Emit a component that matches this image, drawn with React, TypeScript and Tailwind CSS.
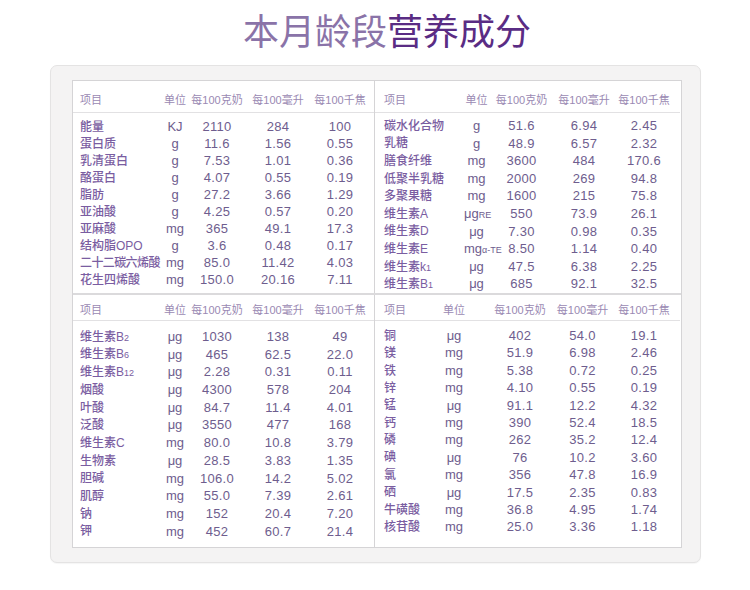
import type { ReactNode } from 'react';

type Row = [ReactNode, ReactNode, string, string, string];

const sub = (base: string, s: string) => (
  <>
    {base}
    <span className="text-[9px]">{s}</span>
  </>
);

const ug = 'μg';

const topLeft: Row[] = [
  ['能量', 'KJ', '2110', '284', '100'],
  ['蛋白质', 'g', '11.6', '1.56', '0.55'],
  ['乳清蛋白', 'g', '7.53', '1.01', '0.36'],
  ['酪蛋白', 'g', '4.07', '0.55', '0.19'],
  ['脂肪', 'g', '27.2', '3.66', '1.29'],
  ['亚油酸', 'g', '4.25', '0.57', '0.20'],
  ['亚麻酸', 'mg', '365', '49.1', '17.3'],
  ['结构脂OPO', 'g', '3.6', '0.48', '0.17'],
  [<span className="tracking-[-0.6px]">二十二碳六烯酸</span>, 'mg', '85.0', '11.42', '4.03'],
  ['花生四烯酸', 'mg', '150.0', '20.16', '7.11'],
];

const topRight: Row[] = [
  ['碳水化合物', 'g', '51.6', '6.94', '2.45'],
  ['乳糖', 'g', '48.9', '6.57', '2.32'],
  ['膳食纤维', 'mg', '3600', '484', '170.6'],
  ['低聚半乳糖', 'mg', '2000', '269', '94.8'],
  ['多聚果糖', 'mg', '1600', '215', '75.8'],
  ['维生素A', sub(ug, 'RE'), '550', '73.9', '26.1'],
  ['维生素D', ug, '7.30', '0.98', '0.35'],
  ['维生素E', sub('mg', 'α-TE'), '8.50', '1.14', '0.40'],
  [sub('维生素k', '1'), ug, '47.5', '6.38', '2.25'],
  [sub('维生素B', '1'), ug, '685', '92.1', '32.5'],
];

const bottomLeft: Row[] = [
  [sub('维生素B', '2'), ug, '1030', '138', '49'],
  [sub('维生素B', '6'), ug, '465', '62.5', '22.0'],
  [sub('维生素B', '12'), ug, '2.28', '0.31', '0.11'],
  ['烟酸', ug, '4300', '578', '204'],
  ['叶酸', ug, '84.7', '11.4', '4.01'],
  ['泛酸', ug, '3550', '477', '168'],
  ['维生素C', 'mg', '80.0', '10.8', '3.79'],
  ['生物素', ug, '28.5', '3.83', '1.35'],
  ['胆碱', 'mg', '106.0', '14.2', '5.02'],
  ['肌醇', 'mg', '55.0', '7.39', '2.61'],
  ['钠', 'mg', '152', '20.4', '7.20'],
  ['钾', 'mg', '452', '60.7', '21.4'],
];

const bottomRight: Row[] = [
  ['铜', ug, '402', '54.0', '19.1'],
  ['镁', 'mg', '51.9', '6.98', '2.46'],
  ['铁', 'mg', '5.38', '0.72', '0.25'],
  ['锌', 'mg', '4.10', '0.55', '0.19'],
  ['锰', ug, '91.1', '12.2', '4.32'],
  ['钙', 'mg', '390', '52.4', '18.5'],
  ['磷', 'mg', '262', '35.2', '12.4'],
  ['碘', ug, '76', '10.2', '3.60'],
  ['氯', 'mg', '356', '47.8', '16.9'],
  ['硒', ug, '17.5', '2.35', '0.83'],
  ['牛磺酸', 'mg', '36.8', '4.95', '1.74'],
  ['核苷酸', 'mg', '25.0', '3.36', '1.18'],
];

interface QuadrantProps {
  rows: Row[];
  cols: string; // grid template + left padding
  firstPad?: string; // extra left pad on the 每100克奶 column
  head: string; // header height / padding
  body: string; // body top padding
  rowH: string;
  className?: string;
}

function Quadrant({ rows, cols, firstPad = '', head, body, rowH, className = '' }: QuadrantProps) {
  return (
    <div className={className}>
      {/* header */}
      <div className={`grid ${cols} ${head} border-b border-[#e2e1e3] text-[11px] leading-[14px] text-[#9a89b3]`}>
        <span>项目</span>
        <span className="text-center">单位</span>
        <span className={`text-center whitespace-nowrap ${firstPad}`}>每100克奶</span>
        <span className="text-center whitespace-nowrap">每100毫升</span>
        <span className="text-center whitespace-nowrap">每100千焦</span>
      </div>
      {/* rows */}
      <div className={body}>
        {rows.map((r, i) => (
          <div key={i} className={`grid ${cols} ${rowH} items-center`}>
            <span className="whitespace-nowrap text-[12px] font-medium text-[#7a5da1]">{r[0]}</span>
            <span className="whitespace-nowrap text-center text-[13px] text-[#6e5d8e]">{r[1]}</span>
            <span className={`text-center text-[13px] tracking-[0.3px] text-[#6e5d8e] ${firstPad}`}>{r[2]}</span>
            <span className="text-center text-[13px] tracking-[0.3px] text-[#6e5d8e]">{r[3]}</span>
            <span className="text-center text-[13px] tracking-[0.3px] text-[#6e5d8e]">{r[4]}</span>
          </div>
        ))}
      </div>
    </div>
  );
}

export default function App() {
  return (
    <div className="w-[750px] h-[590px] bg-white font-['Liberation_Sans','Noto_Sans_CJK_SC',sans-serif]">
      {/* title */}
      <div className="h-[65px] pt-[11px] pl-[243px] text-[36px] leading-[36px] font-['Noto_Sans_CJK_SC',sans-serif]">
        <span className="text-[#8a73a8]">本月龄段</span>
        <span className="text-[#5a2c84]">营养成分</span>
      </div>

      {/* panel */}
      <div className="ml-[50px] w-[651px] h-[498px] rounded-[7px] border border-[#e4e3e3] bg-[#f4f3f3] pl-[21px] pt-[14px] shadow-[0_1px_1px_rgba(0,0,0,0.04)]">
        <div className="w-[610px] h-[468px] border border-[#d5d4d6] bg-white flex flex-col">
          <div className="flex h-[214px] border-b-2 border-[#dbdadc]">
            <Quadrant
              rows={topLeft}
              cols="grid-cols-[83px_24px_60px_62px_62px] pl-[7px]"
              head="h-[32px] pt-[12px]"
              body="pt-[4px]"
              rowH="h-[17px]"
              className="w-[302px] border-r border-[#d5d4d6]"
            />
            <Quadrant
              rows={topRight}
              cols="grid-cols-[80px_25px_65px_60px_60px] pl-[9px]"
              head="h-[32px] pt-[12px]"
              body="pt-[3px]"
              rowH="h-[17.6px]"
              className="w-[305px]"
            />
          </div>
          <div className="flex flex-1">
            <Quadrant
              rows={bottomLeft}
              cols="grid-cols-[83px_24px_60px_62px_62px] pl-[7px]"
              head="h-[26px] pt-[8px]"
              body="pt-[6px]"
              rowH="h-[17.7px]"
              className="w-[302px] border-r border-[#d5d4d6]"
            />
            <Quadrant
              rows={bottomRight}
              cols="grid-cols-[55px_30px_82px_63px_60px] pl-[9px]"
              firstPad="pl-[20px]"
              head="h-[26px] pt-[8px]"
              body="pt-[5px]"
              rowH="h-[17.4px]"
              className="w-[305px]"
            />
          </div>
        </div>
      </div>
    </div>
  );
}
